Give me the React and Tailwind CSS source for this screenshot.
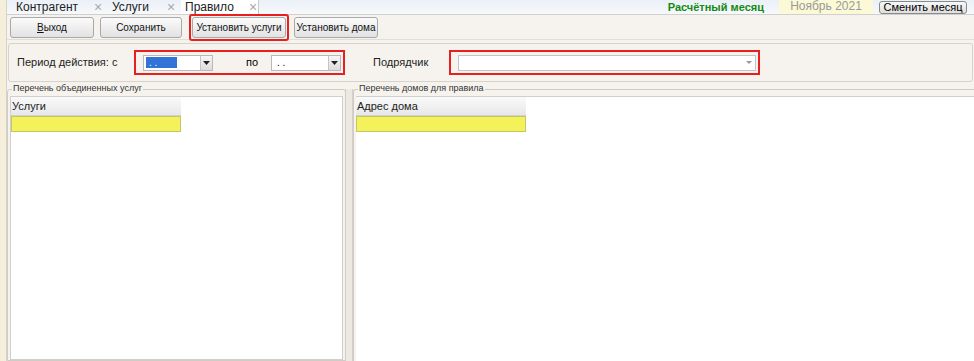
import React from 'react';

function Tab({ label, active, w, pl, gap }) {
  return (
    <div
      className={
        'flex items-center h-[14px] whitespace-nowrap ' +
        (active ? 'bg-white border-r border-[#c8c8c8] ' : '') +
        w + ' ' + pl
      }
    >
      <span className="text-[12px] leading-none text-[#222]">{label}</span>
      <span className={'text-[14px] leading-none text-[#a8a8a8] ' + gap}>×</span>
    </div>
  );
}

function Btn({ children, className = '' }) {
  return (
    <button
      className={
        'h-[21px] rounded-[3px] border border-[#a9a9a9] bg-gradient-to-b from-[#fbfbfb] to-[#e2e2e2] text-[10px] text-[#111] flex items-center justify-center whitespace-nowrap ' +
        className
      }
    >
      {children}
    </button>
  );
}

function DateBox({ selected }) {
  return (
    <div className="flex items-center h-[16px] w-[70px] border border-[#b9b9b9] bg-white">
      <div className="flex-1 px-[2px] flex items-center h-full">
        {selected ? (
          <span className="bg-[#3173d6] text-white text-[10px] leading-[11px] w-[31px] h-[11px] pl-[3px]">. .</span>
        ) : (
          <span className="text-[10px] text-black leading-none pl-[3px]">. .</span>
        )}
      </div>
      <div className="w-[12px] h-full border-l border-[#c6c6c6] bg-gradient-to-b from-[#f6f6f6] to-[#dcdcdc] flex items-center justify-center">
        <svg width="7" height="4" viewBox="0 0 7 4"><path d="M0 0h7L3.5 4z" fill="#222" /></svg>
      </div>
    </div>
  );
}

export default function App() {
  return (
    <div
      className="relative w-[974px] h-[361px] overflow-hidden bg-[#f6f3ee] flex"
      style={{ fontFamily: '"Liberation Sans", Arial, sans-serif' }}
    >
      <div className="w-[7px] bg-[#f5eedb] border-r border-[#d8d3c8]" />
      <div className="flex-1 flex flex-col">
        {/* tabs */}
        <div className="h-[15px] flex items-end bg-gradient-to-b from-[#eaf0f7] to-[#f7f9fb] border-b border-[#d0d0d0]">
          <Tab label="Контрагент" w="w-[96px]" pl="pl-[9px]" gap="ml-[16px]" />
          <Tab label="Услуги" w="w-[78px]" pl="pl-[9px]" gap="ml-[18px]" />
          <Tab label="Правило" active w="w-[78px]" pl="pl-[4px]" gap="ml-[15px]" />
          <div className="flex-1" />
          <div className="flex items-center h-[14px] mr-[7px] whitespace-nowrap">
            <span className="text-[11px] font-bold text-[#138a13] leading-[13px] mr-[15px]">Расчётный месяц</span>
            <span className="bg-[#fbf9d6] text-[12px] text-[#9a9a9a] w-[94px] h-[14px] leading-[13px] text-center mr-[6px]">Ноябрь 2021</span>
            <button className="h-[13px] w-[88px] rounded-[3px] border border-[#8a8a8a] bg-gradient-to-b from-[#f8f8f8] to-[#dedede] text-[11px] leading-[11px]">Сменить месяц</button>
          </div>
        </div>

        {/* toolbar */}
        <div className="h-[25px] flex items-center gap-[6px] pl-[3px] border-b border-[#e2ded8]">
          <Btn className="w-[84px]"><span className="underline decoration-[0.5px]">В</span>ыход</Btn>
          <Btn className="w-[82px]">Сохранить</Btn>
          <div className="outline-2 outline-[#e81f1f] rounded-[1px] p-[1px] ml-[3px]">
            <Btn className="w-[94px]">Установить услуги</Btn>
          </div>
          <Btn className="w-[84px] ml-[1px]">Установить дома</Btn>
        </div>

        {/* filter */}
        <div className="mt-[3px] mx-[1px] h-[39px] border border-[#d7d2ca] rounded-[3px] flex items-center whitespace-nowrap">
          <span className="text-[11px] text-[#222] ml-[8px] w-[117px]">Период действия: с</span>
          <div className="w-[211px] h-[25px] border-2 border-[#e81f1f] flex items-center pl-[7px]">
            <DateBox selected />
            <span className="text-[11px] ml-[33px] w-[25px]">по</span>
            <DateBox />
          </div>
          <span className="text-[11px] text-[#222] ml-[28px] w-[76px]">Подрядчик</span>
          <div className="w-[311px] h-[25px] border-2 border-[#e81f1f] flex items-center pl-[7px]">
            <div className="w-[298px] h-[16px] border border-[#c4c4c4] bg-white flex items-center justify-end pr-[3px]">
              <svg width="6" height="3" viewBox="0 0 6 3"><path d="M0 0h6L3 3z" fill="#999" /></svg>
            </div>
          </div>
        </div>

        {/* panels */}
        <div className="flex-1 flex mt-[7px] whitespace-nowrap">
          <div className="w-[339px] relative border border-[#d0ccc5] rounded-t-[3px] flex flex-col">
            <span className="absolute -top-[6px] left-[4px] bg-[#f6f3ee] px-[1px] text-[9px] leading-none text-[#333]">Перечень объединенных услуг</span>
            <div className="flex-1 mt-[6px] mx-[2px] bg-white border border-[#cfcfcf]">
              <div className="w-[170px] h-[19px] bg-gradient-to-b from-[#fafafa] to-[#e8e8e8] border-b border-[#d0d0d0] text-[11px] leading-[19px] pl-[1px] text-[#222]">Услуги</div>
              <div className="w-[170px] h-[16px] bg-[#f4f25b] border border-[#c8c46a]" />
            </div>
          </div>
          <div className="w-[8px] bg-[#ece8e2] border-x border-[#d4d0c9] ml-[-1px]" />
          <div className="flex-1 relative border-l border-t border-[#d0ccc5] rounded-tl-[3px] flex flex-col">
            <span className="absolute -top-[6px] left-[4px] bg-[#f6f3ee] px-[1px] text-[9px] leading-none text-[#333]">Перечень домов для правила</span>
            <div className="flex-1 mt-[6px] ml-[2px] bg-white border-t border-[#cfcfcf]">
              <div className="w-[170px] h-[19px] bg-gradient-to-b from-[#fafafa] to-[#e8e8e8] border-b border-[#d0d0d0] text-[11px] leading-[19px] pl-[1px] text-[#222]">Адрес дома</div>
              <div className="w-[170px] h-[16px] bg-[#f4f25b] border border-[#c8c46a]" />
            </div>
          </div>
        </div>
      </div>
    </div>
  );
}
